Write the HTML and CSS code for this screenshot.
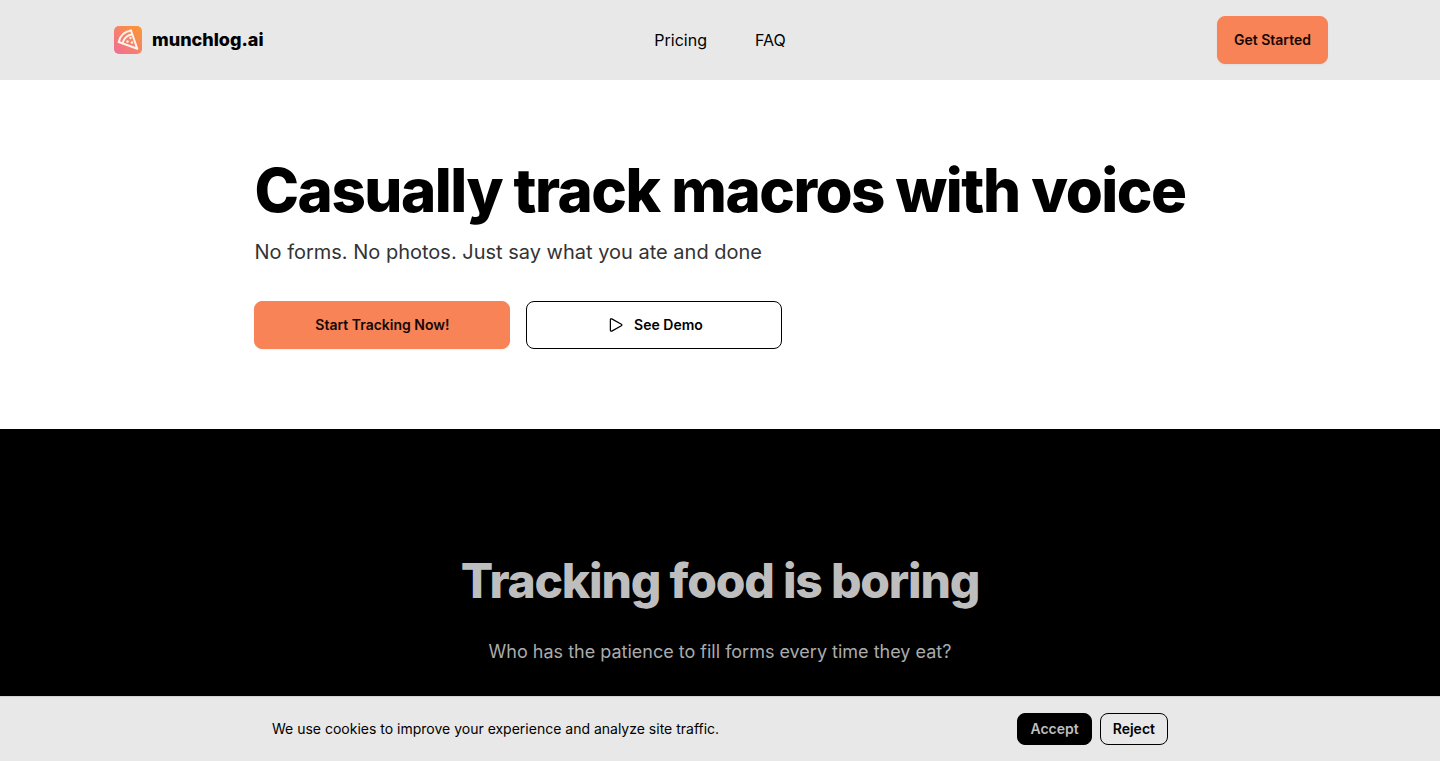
FILE: index.html
```html
<!DOCTYPE html>
<html lang="en">

<head>
    <meta charset="UTF-8">
    <meta name="viewport" content="width=device-width, initial-scale=1.0">
    <title>munchlog.ai</title>
    <link rel="stylesheet" href="styles.css">
</head>

<body>
    <header class="header">
        <nav class="nav">
            <div class="nav-side">
                <a href="/" class="brand">
                    <svg class="logo" viewBox="0 0 32 32" aria-hidden="true">
                        <defs>
                            <linearGradient id="logo-bg" x1="0" y1="1" x2="1" y2="0">
                                <stop offset="0" stop-color="#ee6f98" />
                                <stop offset="0.4" stop-color="#f57d74" />
                                <stop offset="1" stop-color="#fb9a2c" />
                            </linearGradient>
                        </defs>
                        <rect x="2" y="2" width="28" height="28" rx="5" fill="url(#logo-bg)" />
                        <g fill="none" stroke="#fff3ea" stroke-width="2" stroke-linecap="round" stroke-linejoin="round">
                            <path d="M19 6.500C12.500 7.500 8 12 6.700 18" />
                            <path d="M19 6.500L25.300 24.800L6.700 18" />
                            <path d="M19.500 10.500C15.500 11.200 12 14.500 10.500 19" />
                        </g>
                        <g fill="#fff3ea">
                            <circle cx="18.500" cy="14" r="1.200" />
                            <circle cx="15.500" cy="17.500" r="1.200" />
                            <circle cx="20" cy="18.500" r="1.200" />
                        </g>
                    </svg>
                    <span>munchlog.ai</span>
                </a>
            </div>
            <div class="nav-links">
                <a href="#pricing">Pricing</a>
                <a href="#faq">FAQ</a>
            </div>
            <div class="nav-side nav-end">
                <button type="button" class="btn btn-primary">Get Started</button>
            </div>
        </nav>
    </header>

    <main>
        <section class="hero">
            <div class="hero-content">
                <h1>Casually track macros with voice</h1>
                <p>No forms. No photos. Just say what you ate and done</p>
                <div class="hero-actions">
                    <button type="button" class="btn btn-primary btn-wide">Start Tracking Now!</button>
                    <button type="button" class="btn btn-outline btn-wide">
                        <svg class="play" viewBox="0 0 24 24" aria-hidden="true">
                            <path d="M5.250 5.650c0-.86.92-1.400 1.670-.99l11.540 6.350a1.130 1.130 0 0 1 0 1.970L6.920 19.330c-.75.410-1.670-.13-1.670-.99V5.650Z" />
                        </svg>
                        See Demo
                    </button>
                </div>
            </div>
        </section>

        <section class="problem">
            <h2>Tracking food is boring</h2>
            <p>Who has the patience to fill forms every time they eat?</p>
        </section>
    </main>

    <!-- cookie consent -->
    <div class="cookies">
        <div class="cookies-content">
            <p>We use cookies to improve your experience and analyze site traffic.</p>
            <div class="cookies-actions">
                <button type="button" class="btn btn-small btn-neutral">Accept</button>
                <button type="button" class="btn btn-small btn-outline">Reject</button>
            </div>
        </div>
    </div>
</body>

</html>
```

FILE: styles.css
```css
* {
    box-sizing: border-box;
}

body {
    margin: 0;
    font-family: Inter, "Liberation Sans", sans-serif;
    font-size: 16px;
    line-height: 24px;
    color: #000;
    background-color: #fff;
}

h1,
h2,
p {
    margin: 0;
}

a {
    color: inherit;
    text-decoration: none;
}

/* header */
.header {
    background-color: #e8e8e8;
}

.nav {
    display: flex;
    align-items: center;
    max-width: 1280px;
    margin: 0 auto;
    padding: 16px 32px;
}

.nav-side {
    display: flex;
    flex: 1;
}

.nav-end {
    justify-content: flex-end;
}

.brand {
    display: flex;
    align-items: center;
    gap: 8px;
    font-size: 18px;
    line-height: 28px;
    font-weight: 800;
}

.logo {
    width: 32px;
    height: 32px;
}

.nav-links {
    display: flex;
    gap: 48px;
}

/* buttons */
.btn {
    display: inline-flex;
    align-items: center;
    justify-content: center;
    gap: 8px;
    height: 48px;
    padding: 0 16px;
    border: 1px solid transparent;
    border-radius: 8px;
    font-family: inherit;
    font-size: 14px;
    line-height: 14px;
    font-weight: 600;
    cursor: pointer;
}

.btn-primary {
    color: #150603;
    background-color: #f78357;
    border-color: #f78357;
    box-shadow: 0 1px 2px rgba(0, 0, 0, 0.05);
}

.btn-outline {
    color: #000;
    background-color: transparent;
    border-color: #000;
}

.btn-neutral {
    color: #bebebe;
    background-color: #000;
    border-color: #000;
}

.btn-wide {
    width: 256px;
}

.btn-small {
    height: 32px;
    padding: 0 12px;
}

.play {
    width: 20px;
    height: 20px;
    fill: none;
    stroke: currentColor;
    stroke-width: 1.5;
    stroke-linejoin: round;
}

/* hero */
.hero {
    display: flex;
    justify-content: center;
    padding: 80px 32px;
}

.hero h1 {
    font-size: 60px;
    line-height: 60px;
    font-weight: 800;
    letter-spacing: -0.025em;
}

.hero p {
    margin-top: 16px;
    font-size: 20px;
    line-height: 33px;
    color: #333;
}

.hero-actions {
    display: flex;
    flex-wrap: wrap;
    gap: 16px;
    margin-top: 32px;
}

/* problem */
.problem {
    padding: 128px 32px;
    text-align: center;
    color: #bebebe;
    background-color: #000;
}

.problem h2 {
    font-size: 48px;
    line-height: 48px;
    font-weight: 800;
    letter-spacing: -0.025em;
}

.problem p {
    margin-top: 32px;
    font-size: 18px;
    line-height: 30px;
    color: #ababab;
}

/* cookies */
.cookies {
    position: fixed;
    left: 0;
    right: 0;
    bottom: 0;
    padding: 16px;
    border-top: 1px solid #d2d2d2;
    background-color: #e8e8e8;
}

.cookies-content {
    display: flex;
    align-items: center;
    justify-content: space-between;
    gap: 16px;
    max-width: 896px;
    margin: 0 auto;
}

.cookies-content p {
    font-size: 14px;
    line-height: 20px;
}

.cookies-actions {
    display: flex;
    gap: 8px;
}
```
